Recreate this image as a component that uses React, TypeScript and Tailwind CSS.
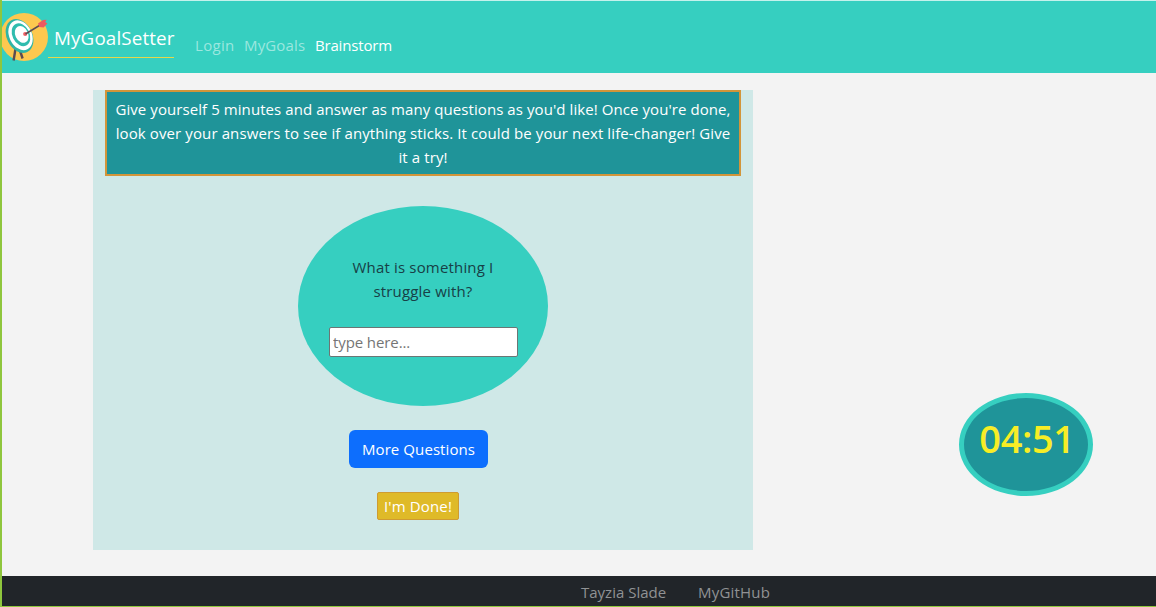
import React from "react";

function TargetLogo() {
  return (
    <svg className="block h-[50px] w-[46px] shrink-0" viewBox="2 12 46 50">
      <circle cx="24" cy="37" r="24" fill="#fdc84f" />
      <path d="M15.6 48 L13.6 60.5 M19.8 50 L22.6 58.5" stroke="#5d4b50" strokeWidth="2.4" fill="none" />
      <g transform="rotate(-26 20 35.5)">
        <ellipse cx="19.4" cy="35.7" rx="12.8" ry="17.8" fill="#2fb5a6" />
        <ellipse cx="20.6" cy="35.5" rx="11.2" ry="15.6" fill="#ffffff" />
        <ellipse cx="21.2" cy="35.3" rx="8.6" ry="12" fill="#2fbcae" />
        <ellipse cx="22" cy="35.3" rx="6.4" ry="8.8" fill="#ffffff" />
      </g>
      <circle cx="25.2" cy="34" r="2.1" fill="#ee5f64" />
      <path d="M25.5 34 L41 24.5" stroke="#5d4b50" strokeWidth="1.5" />
      <path d="M38 23.4 L43 20 L46.6 19.8 L45.2 22 L47.4 23.4 L43.6 27.6 L39.3 27 Z" fill="#ec5a60" />
    </svg>
  );
}

function Header() {
  return (
    <header className="flex h-[73px] shrink-0 items-start border-t border-[#c5f2ec] bg-[#36cfc0]">
      <div className="flex pt-[11px]">
        <TargetLogo />
        <div className="flex h-[46px] w-[126px] items-start border-b border-b-[#e6d84a] pt-[11px] pl-[6px] text-[18.8px] leading-[30px] tracking-[0.14px] whitespace-nowrap text-white">
          MyGoalSetter
        </div>
      </div>
      <nav className="flex pt-8 pl-[21px] text-[15px] leading-6 whitespace-nowrap text-white">
        <a className="w-[49px] tracking-[0.3px] text-[#9be7df]">Login</a>
        <a className="w-[71px] tracking-[0.15px] text-[#9be7df]">MyGoals</a>
        <a className="tracking-[-0.18px]">Brainstorm</a>
      </nav>
    </header>
  );
}

export default function App() {
  return (
    <div className="flex h-[607px] w-full flex-col overflow-hidden border-b border-l-2 border-[#8fc63d] bg-[#f3f3f3] font-['Open_Sans','Noto_Sans',sans-serif] text-[15px] leading-6">
      <Header />
      <main className="flex grow items-start pt-[17px] pl-[91px]">
        <section className="flex h-[460px] w-[660px] flex-col items-center bg-[#cfe8e7]">
          <div className="h-[86px] w-[636px] border-2 border-[#d2953a] bg-[#1f9499] pt-[5px] text-center whitespace-nowrap text-white">
            <p className="tracking-[0.075px]">Give yourself 5 minutes and answer as many questions as you'd like! Once you're done,</p>
            <p className="tracking-[0.11px]">look over your answers to see if anything sticks. It could be your next life-changer! Give</p>
            <p className="tracking-[0.11px]">it a try!</p>
          </div>
          <div className="mt-[30px] flex h-[200px] w-[250px] flex-col items-center rounded-[50%] bg-[#36cfc0] pt-[49px]">
            <p className="text-center tracking-[0.17px] text-[#184046]">
              What is something I<br />struggle with?
            </p>
            <input
              placeholder="type here..."
              className="mt-6 ml-px h-[30px] w-[189px] rounded-[2px] border border-[#6b7675] bg-white px-[3px] tracking-[-0.1px] text-[#333] placeholder:text-[#757575]"
            />
          </div>
          <button className="mt-6 mr-[9px] h-[38px] w-[139px] rounded-md bg-[#0d6efd] tracking-[0.08px] whitespace-nowrap text-white">
            More Questions
          </button>
          <button className="mt-6 mr-[10px] h-[28px] w-[82px] rounded-[2px] border border-[#cf9b32] bg-[#dfba28] tracking-[0.15px] whitespace-nowrap text-white">
            I'm Done!
          </button>
        </section>
        <div className="mt-[303px] ml-[206px] flex h-[103px] w-[134px] justify-center rounded-[50%] border-[5px] border-[#36cfc0] bg-[#1f9499] pt-[16px] pl-[2px] text-[38px] leading-[48px] font-semibold tracking-[-0.4px] text-[#f7ed26]">
          04:51
        </div>
      </main>
      <footer className="flex h-[30px] shrink-0 items-center bg-[#212529] pt-[2px] pl-[579px] whitespace-nowrap text-[#909294]">
        <a className="w-[117px]">Tayzia Slade</a>
        <a className="tracking-[0.2px]">MyGitHub</a>
      </footer>
    </div>
  );
}
